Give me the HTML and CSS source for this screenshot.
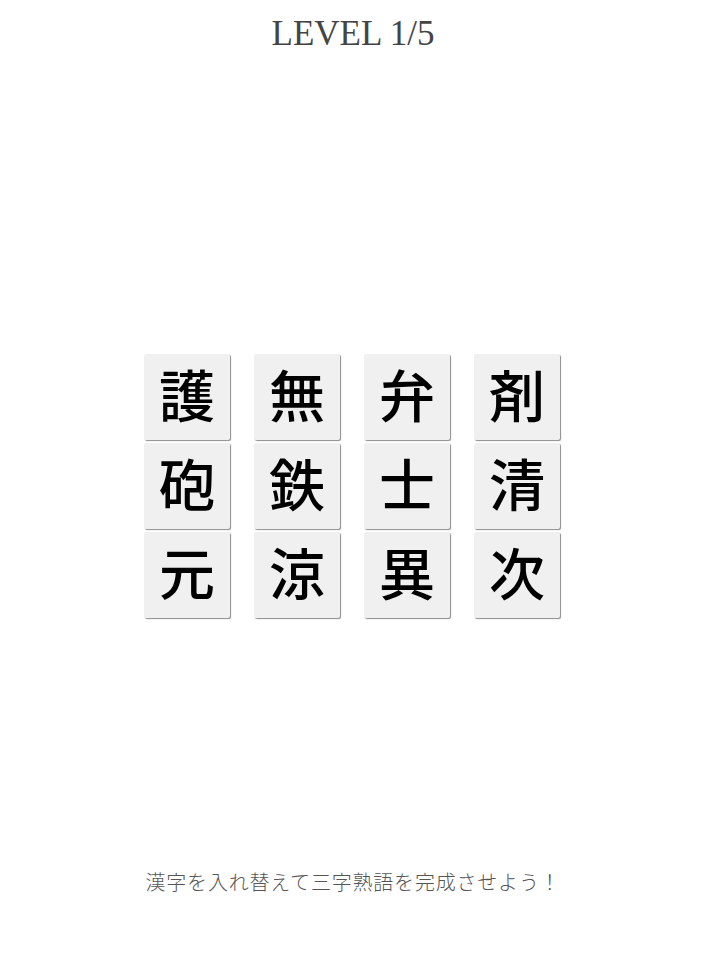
FILE: index.html
```html
<!DOCTYPE html>
<html lang="ja">
<head>
<meta charset="utf-8">
<title>LEVEL 1/5</title>
<link rel="stylesheet" href="styles.css">
</head>
<body>
<div class="page">
  <h1 class="level">LEVEL 1/5</h1>
  <div class="board">
    <div class="tile">護</div>
    <div class="tile">無</div>
    <div class="tile">弁</div>
    <div class="tile">剤</div>
    <div class="tile">砲</div>
    <div class="tile">鉄</div>
    <div class="tile">士</div>
    <div class="tile">清</div>
    <div class="tile">元</div>
    <div class="tile">涼</div>
    <div class="tile">異</div>
    <div class="tile">次</div>
  </div>
  <p class="hint">漢字を入れ替えて三字熟語を完成させよう！</p>
</div>
</body>
</html>
```
FILE: styles.css
```css
html, body {
  margin: 0;
  padding: 0;
  background: #ffffff;
}
.page {
  width: 706px;
  height: 971px;
  display: flex;
  flex-direction: column;
  align-items: center;
}
.level {
  margin: 14px 0 0 0;
  height: 40px;
  line-height: 40px;
  font-family: "Liberation Serif", "Times New Roman", serif;
  font-weight: normal;
  font-size: 35px;
  color: #444444;
}
.board {
  margin-top: 300px;
  display: grid;
  grid-template-columns: repeat(4, 86px);
  grid-auto-rows: 86px;
  column-gap: 24px;
  row-gap: 3px;
  margin-right: 2px;
}
.tile {
  background: #f0f0f0;
  border-radius: 2px;
  box-shadow: 1px 1px 1px #8c8c8c;
  display: flex;
  align-items: center;
  justify-content: center;
  padding-bottom: 9px;
  box-sizing: border-box;
  font-family: "Noto Sans CJK JP", "Noto Sans", sans-serif;
  font-size: 56px;
  font-weight: 500;
  color: #000000;
  line-height: 1;
}
.hint {
  margin: 250px 0 0 0;
  font-family: "Noto Sans CJK JP", "Noto Sans", sans-serif;
  font-weight: 300;
  font-size: 20px;
  line-height: 28px;
  color: #555555;
  letter-spacing: 0.8px;
}
```
